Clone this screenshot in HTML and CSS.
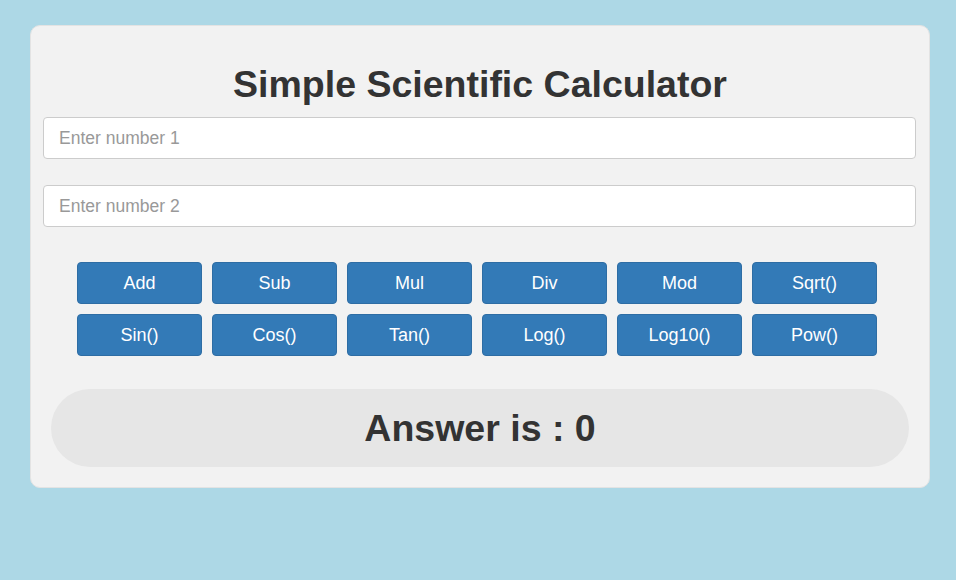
FILE: index.html
```html
<!DOCTYPE html>
<html>
<head>
<meta charset="utf-8">
<link rel="stylesheet" href="styles.css">
</head>
<body>
<div class="card">
  <h1 class="title">Simple Scientific Calculator</h1>
  <input class="field" type="text" placeholder="Enter number 1">
  <input class="field field-second" type="text" placeholder="Enter number 2">
  <div class="buttons">
    <button class="btn">Add</button>
    <button class="btn">Sub</button>
    <button class="btn">Mul</button>
    <button class="btn">Div</button>
    <button class="btn">Mod</button>
    <button class="btn">Sqrt()</button>
    <button class="btn">Sin()</button>
    <button class="btn">Cos()</button>
    <button class="btn">Tan()</button>
    <button class="btn">Log()</button>
    <button class="btn">Log10()</button>
    <button class="btn">Pow()</button>
  </div>
  <div class="answer">Answer is : 0</div>
</div>
</body>
</html>
```
FILE: styles.css
```css
html, body {
  margin: 0;
  padding: 0;
}
body {
  background: #add8e6;
  font-family: "Liberation Sans", Arial, sans-serif;
  color: #333;
}
.card {
  box-sizing: border-box;
  width: 900px;
  margin: 25px 0 0 30px;
  background: #f2f2f2;
  border: 1px solid #e3e3e3;
  border-radius: 10px;
  padding: 38px 12px 20px 12px;
}
.title {
  margin: 0 0 12px 0;
  text-align: center;
  font-size: 37.5px;
  font-weight: bold;
  line-height: 41px;
  color: #333;
}
.field {
  display: block;
  box-sizing: border-box;
  width: 873px;
  height: 42px;
  margin: 0;
  padding: 0 15px;
  border: 1px solid #ccc;
  border-radius: 4px;
  background: #fff;
  font-family: "Liberation Sans", Arial, sans-serif;
  font-size: 17.5px;
  color: #555;
  outline: none;
}
.field::placeholder {
  color: #999;
}
.field-second {
  margin-top: 26px;
}
.buttons {
  display: grid;
  grid-template-columns: repeat(6, 125px);
  grid-auto-rows: 42px;
  gap: 10px;
  justify-content: center;
  margin-top: 35px;
  padding-right: 6px;
}
.btn {
  box-sizing: border-box;
  margin: 0;
  padding: 0;
  background: #337ab7;
  border: 1px solid #2e6da4;
  border-radius: 4px;
  color: #fff;
  font-family: "Liberation Sans", Arial, sans-serif;
  font-size: 18px;
  cursor: pointer;
}
.answer {
  margin: 33px 8px 0 8px;
  height: 78px;
  border-radius: 39px;
  background: #e6e6e6;
  display: flex;
  align-items: center;
  justify-content: center;
  font-size: 37.5px;
  font-weight: bold;
  color: #333;
}
```
